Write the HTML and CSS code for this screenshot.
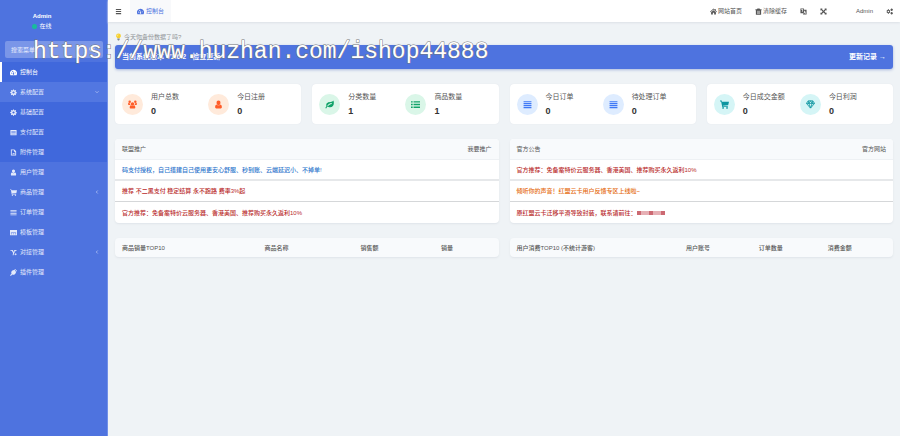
FILE: index.html
```html
<!DOCTYPE html>
<html lang="zh-CN">
<head>
<meta charset="utf-8">
<title>控制台</title>
<link rel="stylesheet" href="styles.css">
</head>
<body>
<svg class="defs" aria-hidden="true">
  <symbol id="dash" viewBox="0 0 16 16"><path fill-rule="evenodd" d="M8 2a8 8 0 0 0-7 12h14A8 8 0 0 0 8 2zM3 9.500a1.100 1.100 0 1 1 0 .1zM5 5.500a1.100 1.100 0 1 1 0 .1zM11 9.500a1.100 1.100 0 1 1 2 0zM8.500 5 9 10.500a1.500 1.500 0 1 1-2 0z"/></symbol>
  <symbol id="gear" viewBox="0 0 16 16"><path fill-rule="evenodd" d="M7 1h2l.5 2 1.500.6L13 2.500 14 4l-1 1.700.5 1.300 2 .5v2l-2 .5-.6 1.500L14 13l-1.500 1.300-1.700-1.200-1.300.5L9 15.500H7l-.5-2-1.500-.5-1.700 1.200L2 12.700l1.100-1.700L2.500 9.500.5 9V7l2-.5.6-1.500L2 3.500 3.500 2l1.500 1.200L6.500 3zM8 5.500A2.500 2.500 0 1 0 8 10.500 2.500 2.500 0 0 0 8 5.500z"/></symbol>
  <symbol id="gears" viewBox="0 0 16 16"><path fill-rule="evenodd" d="M4.500 3h2l.5 1.600 1.700.3 1 1.600L9 8l.7 1.500-1 1.600-1.700.3L6.500 13h-2L4 11.400l-1.700-.3-1-1.600L2 8l-.7-1.500 1-1.600L4 4.600zM5.500 6.200a1.800 1.800 0 1 0 0 3.600 1.800 1.800 0 0 0 0-3.600zM12 1h2l.3 1.300 1.400.7v2l-1.400.5L14 7h-2l-.5-1.500L10.300 5V3l1.200-.7zM12 9h2l.3 1.300 1.400.7v2l-1.400.5L14 15h-2l-.5-1.500-1.200-.5v-2l1.200-.7z"/></symbol>
  <symbol id="card" viewBox="0 0 16 16"><path fill-rule="evenodd" d="M1 2h14v12H1zM3 5v1h10V5zm0 3v1h10V8zm0 3v1h10v-1z"/></symbol>
  <symbol id="file" viewBox="0 0 16 16"><path fill-rule="evenodd" d="M2 1h8l4 4v10H2zm2 2v10h8V6H9V3zm1 9 2-3 1 1 1.500-2L11 12z"/></symbol>
  <symbol id="user" viewBox="0 0 16 16"><path d="M8 1a3.500 3.500 0 0 0-3.500 3.800C4.600 7 6 9 8 9s3.400-2 3.500-4.200A3.500 3.500 0 0 0 8 1zM4.500 8C2.500 8.500 2 11 2 13q0 2 2 2h8q2 0 2-2c0-2-.5-4.500-2.500-5-2 2-5 2-7 0z"/></symbol>
  <symbol id="group" viewBox="0 0 16 16"><path d="M8 4a3 3 0 1 0 0 6 3 3 0 0 0 0-6zM5 9.500C3.500 10 3 12 3 13.500Q3 15 4.500 15h7q1.500 0 1.500-1.500c0-1.500-.5-3.500-2-4-1.500 1.500-4.500 1.500-6 0zM3 1a2.200 2.200 0 1 0 0 4.400A2.200 2.200 0 0 0 3 1zm10 0a2.200 2.200 0 1 0 0 4.400A2.200 2.200 0 0 0 13 1zM.8 5C0 5.500 0 9 1 9h3V6C3 6 2 6 .8 5zm14.400 0C14 6 13 6 12 6v3h3c1 0 1-3.500.2-4z"/></symbol>
  <symbol id="cart" viewBox="0 0 16 16"><path d="M0 1h3l.5 2H16l-1.500 6.500-9.500.8.200 1H14v1.200H4L2 2.500H0z"/><circle cx="5.500" cy="14" r="1.500"/><circle cx="12.500" cy="14" r="1.500"/></symbol>
  <symbol id="bars" viewBox="0 0 16 16"><path d="M1 2h14v2H1zm0 3.500h14v2H1zM1 9h14v2H1zm0 3.500h14v2H1z"/></symbol>
  <symbol id="menu" viewBox="0 0 16 16"><path d="M2 2h12v2.500H2zm0 4.800h12v2.500H2zm0 4.700h12V14H2z"/></symbol>
  <symbol id="list" viewBox="0 0 16 16"><path d="M0 2h3v2.500H0zm4.500 0H16v2.500H4.500zM0 6.700h3v2.500H0zm4.500 0H16v2.500H4.500zM0 11.500h3V14H0zm4.500 0H16V14H4.500z"/></symbol>
  <symbol id="screen" viewBox="0 0 16 16"><path fill-rule="evenodd" d="M0 2h16v12H0zm2 5v1h12V7zm0 3v2h3v-2zm5 0v2h2v-2zm4 0v2h3v-2z"/></symbol>
  <symbol id="link" viewBox="0 0 16 16"><path d="M1 2h5l3 5 2-3H9V2h6v2h-2L9.500 9 8 14H6l1-5-3-5H1zM10 12l3-3v2h2v2h-2v2z"/></symbol>
  <symbol id="plug" viewBox="0 0 16 16"><path d="m9 3 3-3 1.500 1.500L11 4.500 12 5.500l3-3L16 4l-3 3 1 1-1 1c-1 4-5 5-8 3.500L2 16l-2-2 3.500-3C2 8 3 4 7 3l1-1z"/></symbol>
  <symbol id="home" viewBox="0 0 16 16"><path d="m8 1 3 2.800V2h2v3.600L16 8.500l-1 1-7-6-7 6-1-1zM8 5l5.500 4.500V15h-4v-4h-3v4h-4V9.500z"/></symbol>
  <symbol id="trash" viewBox="0 0 16 16"><path fill-rule="evenodd" d="M5.500 1h5l1 2H15v2h-1v10.500H2V5H1V3h3.500zM5 6v7.500h1V6zm2.500 0v7.500h1V6zM10 6v7.500h1V6z"/></symbol>
  <symbol id="lang" viewBox="0 0 16 16"><path fill-rule="evenodd" d="M1 1h8v3h6v11H7v-3H1zm2 2v1.500h3L4 8l1 1 2-3V3zm7 3-2 7h1.500l.4-1.500h1.800l.3 1.500h1.500l-2-7zm.8 2.500.4 1.500h-.9z"/></symbol>
  <symbol id="expand" viewBox="0 0 16 16"><path d="M1 1h5L4.500 2.500 8 6l3.500-3.500L10 1h5v5l-1.500-1.500L10 8l3.500 3.500L15 10v5h-5l1.500-1.500L8 10l-3.500 3.500L6 15H1v-5l1.500 1.500L6 8 2.500 4.500 1 6z"/></symbol>
  <symbol id="leaf" viewBox="0 0 16 16"><path fill-rule="evenodd" d="M15 1c2 6 0 12-6 12-2 0-4-1-5-1l-2 3-1.500-1 2-3C1 5 6 3.500 10 3.500c2 0 4-1 5-2.500zM12 5.500C8 6 5.500 7.500 4 10.500l1 .8C7 8.500 9 7.500 12 7z"/></symbol>
  <symbol id="gem" viewBox="0 0 16 16"><path fill="none" stroke="currentColor" stroke-width="1.500" stroke-linejoin="round" d="M4 1.500h8L15.200 6 8 14.500.8 6zM1 6h14M5 6l3 8 3-8-3-4.500zM4 1.500 5 6m7-4.500L11 6"/></symbol>
  <symbol id="search" viewBox="0 0 16 16"><path fill="none" stroke="currentColor" stroke-width="2" d="M10.500 10.500 15 15M6.500 1.500a5 5 0 1 0 0 10 5 5 0 0 0 0-10z"/></symbol>
  <symbol id="bulb" viewBox="0 0 16 16"><path fill="#f6cf2f" d="M8 0a5.500 5.500 0 0 0-5.500 5.500C2.500 8 5 9 5 11h6c0-2 2.500-3 2.500-5.500A5.500 5.500 0 0 0 8 0z"/><path fill="#fff3a0" d="M6 2.500h2L6.500 6H5z"/><path fill="#7d8792" d="M5.500 11.500h5V14L9 16H7l-1.500-2z"/></symbol>
  <symbol id="down" viewBox="0 0 16 16"><path fill="none" stroke="currentColor" stroke-width="3" d="m2 5 6 6 6-6"/></symbol>
  <symbol id="left" viewBox="0 0 16 16"><path fill="none" stroke="currentColor" stroke-width="3" d="m11 2-6 6 6 6"/></symbol>
</svg>
<div class="app">
  <aside class="sidebar">
    <div class="profile">
      <strong>Admin</strong>
      <span class="status"><i class="dot"></i>在线</span>
    </div>
    <form class="search">
      <input type="text" placeholder="搜索菜单" aria-label="搜索菜单">
      <button type="button" aria-label="搜索"><svg class="icon"><use href="#search"/></svg></button>
    </form>
    <nav class="menu">
      <a href="#" class="active"><svg class="icon"><use href="#dash"/></svg>控制台</a>
      <a href="#" class="open"><svg class="icon"><use href="#gear"/></svg>系统配置<svg class="arrow"><use href="#down"/></svg></a>
      <div class="submenu">
        <a href="#"><svg class="icon"><use href="#gear"/></svg>基础配置</a>
        <a href="#"><svg class="icon"><use href="#card"/></svg>支付配置</a>
        <a href="#"><svg class="icon"><use href="#file"/></svg>附件管理</a>
      </div>
      <a href="#"><svg class="icon"><use href="#user"/></svg>用户管理</a>
      <a href="#"><svg class="icon"><use href="#cart"/></svg>商品管理<svg class="arrow"><use href="#left"/></svg></a>
      <a href="#"><svg class="icon"><use href="#bars"/></svg>订单管理</a>
      <a href="#"><svg class="icon"><use href="#screen"/></svg>模板管理</a>
      <a href="#"><svg class="icon"><use href="#link"/></svg>对接管理<svg class="arrow"><use href="#left"/></svg></a>
      <a href="#"><svg class="icon"><use href="#plug"/></svg>插件管理</a>
    </nav>
  </aside>
  <div class="page">
    <header class="topbar">
      <button type="button" class="toggle" aria-label="菜单"><svg class="icon"><use href="#menu"/></svg></button>
      <a href="#" class="tab"><svg class="icon"><use href="#dash"/></svg>控制台</a>
      <div class="tools">
        <a href="#"><svg class="icon"><use href="#home"/></svg>网站首页</a>
        <a href="#"><svg class="icon"><use href="#trash"/></svg>清除缓存</a>
        <button type="button" aria-label="语言"><svg class="icon"><use href="#lang"/></svg></button>
        <button type="button" aria-label="全屏"><svg class="icon"><use href="#expand"/></svg></button>
        <a href="#" class="account">Admin</a>
        <button type="button" aria-label="设置"><svg class="icon"><use href="#gears"/></svg></button>
      </div>
    </header>
    <main class="content">
      <p class="tip"><svg class="bulb"><use href="#bulb"/></svg>今天你备份数据了吗?</p>
      <section class="banner">
        <span>当前系统版本 V1.6.2</span>
        <a href="#">检查更新</a>
        <a href="#" class="log">更新记录 →</a>
      </section>
      <section class="stats">
        <div class="card orange">
          <div class="stat"><span class="badge"><svg><use href="#group"/></svg></span><div><span>用户总数</span><b>0</b></div></div>
          <div class="stat"><span class="badge"><svg><use href="#user"/></svg></span><div><span>今日注册</span><b>0</b></div></div>
        </div>
        <div class="card green">
          <div class="stat"><span class="badge"><svg><use href="#leaf"/></svg></span><div><span>分类数量</span><b>1</b></div></div>
          <div class="stat"><span class="badge"><svg><use href="#list"/></svg></span><div><span>商品数量</span><b>1</b></div></div>
        </div>
        <div class="card blue">
          <div class="stat"><span class="badge"><svg><use href="#bars"/></svg></span><div><span>今日订单</span><b>0</b></div></div>
          <div class="stat"><span class="badge"><svg><use href="#bars"/></svg></span><div><span>待处理订单</span><b>0</b></div></div>
        </div>
        <div class="card teal">
          <div class="stat"><span class="badge"><svg><use href="#cart"/></svg></span><div><span>今日成交金额</span><b>0</b></div></div>
          <div class="stat"><span class="badge"><svg><use href="#gem"/></svg></span><div><span>今日利润</span><b>0</b></div></div>
        </div>
      </section>
      <div class="columns">
        <section class="panel">
          <header><span>联盟推广</span><a href="#">我要推广</a></header>
          <a href="#" class="row info">码支付授权，自己搭建自己使用更安心舒服、秒到账、云端延迟小、不掉单!</a>
          <a href="#" class="row">推荐 不二黑支付 稳定结算 永不跑路 费率3%起</a>
          <a href="#" class="row">官方推荐：免备案特价云服务器、香港美国、推荐购买永久返利10%</a>
        </section>
        <section class="panel">
          <header><span>官方公告</span><a href="#">官方网站</a></header>
          <a href="#" class="row first">官方推荐：免备案特价云服务器、香港美国、推荐购买永久返利10%</a>
          <a href="#" class="row warn">倾听你的声音！红盟云卡用户反馈专区上线啦~</a>
          <a href="#" class="row">原红盟云卡迁移平滑导致封装，联系请前往：<span class="masked"><i></i><i></i><i></i><i></i><i></i><i></i><i></i></span></a>
        </section>
        <table class="panel goods">
          <thead><tr><th>商品销量TOP10</th><th>商品名称</th><th>销售额</th><th>销量</th></tr></thead>
        </table>
        <table class="panel users">
          <thead><tr><th>用户消费TOP10 (不统计游客)</th><th>用户账号</th><th>订单数量</th><th>消费金额</th></tr></thead>
        </table>
      </div>
    </main>
  </div>
</div>
<div class="watermark">https://www.huzhan.com/ishop44888</div>
</body>
</html>
```
FILE: styles.css
```css
* { box-sizing: border-box; }
body {
  margin: 0;
  background: #eff3f6;
  color: #555;
  font: 6px/10px "Liberation Sans", "Noto Sans CJK SC", sans-serif;
}
a { color: inherit; text-decoration: none; }
button { display: flex; padding: 0; border: 0; background: none; color: inherit; }
svg { fill: currentColor; flex: none; }
.defs { display: none; }
.icon { width: 7px; height: 7px; }
.app { display: flex; min-height: 100vh; }

.sidebar {
  flex: none;
  width: 108px;
  background: #4e73df;
  border-right: 1px solid #7190e8;
  color: #e4eafb;
}
.profile {
  display: flex;
  flex-direction: column;
  align-items: center;
  width: 84px;
  padding-top: 11px;
  color: #fff;
}
.status { display: flex; align-items: center; gap: 2px; }
.dot { width: 5px; height: 5px; border-radius: 50%; background: #18bc9c; }
.search {
  display: flex;
  align-items: center;
  height: 17px;
  margin: 10px 4px 4px 5px;
  padding: 0 7px 0 6px;
  border-radius: 2px;
  background: #7a96e8;
}
.search input {
  flex: 1;
  min-width: 0;
  padding: 0;
  border: 0;
  outline: 0;
  background: none;
  color: #fff;
  font: inherit;
}
.search input::placeholder { color: #e8eefd; }
.menu a {
  display: flex;
  align-items: center;
  gap: 3px;
  height: 20px;
  padding: 0 8px 0 10px;
}
.menu .active {
  padding-left: 8px;
  border-left: 2px solid #fff;
  background: #4068dc;
  color: #fff;
}
.menu .open { background: #5277e1; }
.submenu { background: #4068dc; }
.arrow { width: 4px; height: 4px; margin-left: auto; color: #b5c5f3; }

.page { flex: 1; min-width: 0; }
.topbar {
  display: flex;
  height: 22px;
  background: #fff;
  box-shadow: 0 1px 2px #dce1e6;
}
.toggle { align-items: center; padding: 0 8px 0 7px; }
.tab {
  display: flex;
  align-items: center;
  gap: 2px;
  padding: 0 7px;
  background: #f8f9fb;
  color: #4e73df;
}
.tools {
  display: flex;
  align-items: center;
  gap: 13px;
  margin-left: auto;
  padding-right: 7px;
}
.tools a { display: flex; align-items: center; gap: 1px; }
.tools .account { margin-left: 16px; }

.content { padding: 10px 7px; }
.tip {
  display: flex;
  align-items: center;
  gap: 2px;
  height: 10px;
  margin: 0 0 3px;
  color: #909396;
}
.bulb { width: 7px; height: 8px; }
.banner {
  display: flex;
  align-items: center;
  gap: 6px;
  height: 24px;
  padding: 0 7px;
  border-radius: 3px;
  background: #4e73df;
  box-shadow: 0 1px 3px #aab9dd;
  color: #fff;
  font-size: 7px;
  font-weight: bold;
}
.log { margin-left: auto; }
.stats {
  display: grid;
  grid-template-columns: repeat(4, 1fr);
  gap: 11px;
  margin: 15px 0;
}
.card {
  display: grid;
  grid-template-columns: 1fr 1fr;
  height: 40px;
  padding: 0 7px;
  border-radius: 4px;
  background: #fff;
  box-shadow: 0 0 1px #d9dfe5;
}
.stat { display: flex; align-items: center; gap: 8px; }
.stat div { display: flex; flex-direction: column; gap: 4px; font-size: 7px; white-space: nowrap; }
.stat b { font-size: 9px; color: #333; }
.badge {
  display: flex;
  align-items: center;
  justify-content: center;
  width: 21px;
  height: 21px;
  border-radius: 50%;
}
.badge svg { width: 9px; height: 9px; }
.orange .badge { background: #ffeadb; color: #ff5c28; }
.green .badge { background: #daf6e8; color: #12a36a; }
.blue .badge { background: #deecff; color: #3f78f6; }
.teal .badge { background: #d5f5f6; color: #0c95a0; }

.columns { display: grid; grid-template-columns: 1fr 1fr; gap: 15px 11px; }
.panel {
  overflow: hidden;
  width: 100%;
  border-radius: 4px;
  background: #fff;
  box-shadow: 0 1px 2px #dfe4e9;
}
.panel header {
  display: flex;
  align-items: center;
  justify-content: space-between;
  height: 21px;
  padding: 0 7px;
  border-bottom: 1px solid #eef1f4;
  background: #f8fafc;
}
.row {
  display: flex;
  align-items: center;
  height: 21px;
  padding: 0 7px;
  border-bottom: 1px solid #d5d7d9;
  color: #b92b2b;
  font-weight: 500;
}
.row:last-child { border: 0; }
.info, .first { border-bottom: 2px solid #e6e8ea; }
.info { color: #2b73cb; }
.warn { color: #e56a0c; }
.masked { display: flex; }
.masked i { width: 4px; height: 4px; background: #e6afb4; }
.masked i:nth-child(3n+1) { background: #cc6972; }
table.panel { border-collapse: collapse; table-layout: fixed; background: #f8fafc; }
th { height: 19px; padding: 0; font-weight: 500; text-align: left; }
th:first-child { padding-left: 7px; }
.goods th:nth-child(1) { width: 39%; }
.goods th:nth-child(2) { width: 25%; }
.goods th:nth-child(3) { width: 21%; }
.users th:nth-child(1) { width: 46%; }
.users th:nth-child(2) { width: 19%; }
.users th:nth-child(3) { width: 18%; }

.watermark {
  position: absolute;
  top: 37px;
  left: 33px;
  color: #fff;
  font: 23px/30px "Liberation Mono", monospace;
  -webkit-text-stroke: 1px #777;
  paint-order: stroke fill;
  pointer-events: none;
}
```
